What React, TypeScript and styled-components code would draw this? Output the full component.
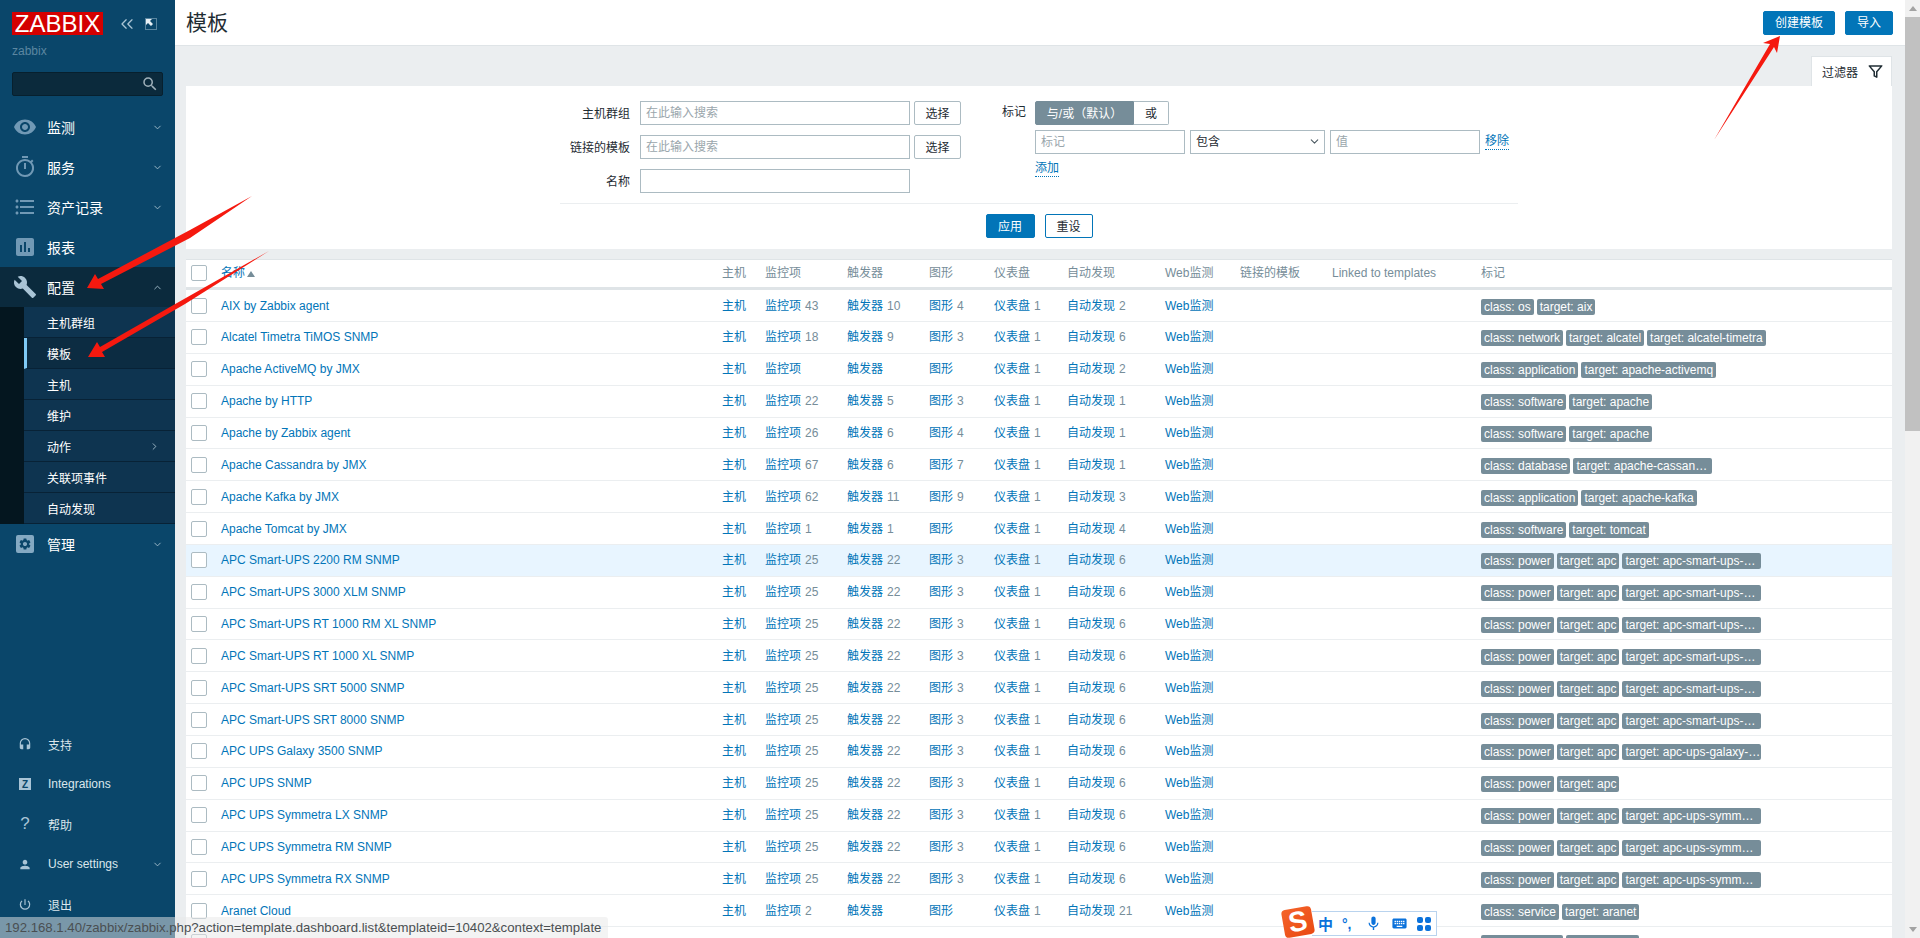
import React from 'react'
import styled, { createGlobalStyle } from 'styled-components'
import {
  MdVisibility,
  MdOutlineTimer,
  MdFormatListBulleted,
  MdAssessment,
  MdBuild,
  MdSettings,
  MdHeadset,
  MdPerson,
  MdPowerSettingsNew,
  MdMic,
  MdKeyboard,
  MdSearch,
} from 'react-icons/md'
import { LuChevronDown, LuChevronUp, LuChevronRight, LuChevronsLeft } from 'react-icons/lu'
import { FiFilter } from 'react-icons/fi'

const blue = '#0275b8'
const grey = '#768d99'
const dark = '#1f2c33'
const line = '#ebeef0'
const inputLine = '#acbbc2'

const GlobalStyle = createGlobalStyle`
  html, body {
    margin: 0;
    padding: 0;
    background: ${line};
  }
  * {
    box-sizing: border-box;
  }
  body {
    font-family: "Liberation Sans", "Noto Sans CJK SC", sans-serif;
    font-size: 12px;
    color: ${dark};
  }
`

const Page = styled.div`
  position: relative;
  display: flex;
  width: 1920px;
  height: 938px;
  overflow: hidden;
`

/* sidebar */

const Sidebar = styled.aside`
  display: flex;
  flex-direction: column;
  flex: none;
  width: 175px;
  padding-bottom: 14px;
  background: #0a466a;
  color: #fff;
`

const LogoRow = styled.div`
  display: flex;
  align-items: center;
  padding: 12px 0 0 12px;
`

const Logo = styled.div`
  width: 91px;
  height: 23px;
  background: #d40000;
  color: #fff;
  font-size: 24px;
  line-height: 24px;
  text-align: center;
  letter-spacing: 0;
`

const LogoButton = styled.span`
  display: flex;
  margin-left: 14px;
  color: #a9c4d4;
`

const KioskButton = styled.svg`
  margin-left: 8px;
`

const ServerName = styled.div`
  margin: 9px 0 0 12px;
  height: 14px;
  color: #5c87a1;
  font-size: 12px;
  line-height: 14px;
`

const SearchBox = styled.div`
  display: flex;
  align-items: center;
  justify-content: flex-end;
  height: 24px;
  margin: 14px 12px 0;
  padding-right: 3px;
  border: 1px solid #07202e;
  border-radius: 2px;
  background: #0b2a3c;
  color: #9fb0ba;
  font-size: 18px;
`

const Nav = styled.nav`
  margin-top: 11px;
`

const NavItem = styled.div<{ $open?: boolean }>`
  display: flex;
  align-items: center;
  height: 40px;
  padding: 0 12px 0 13px;
  background: ${p => (p.$open ? '#0b2a3d' : 'transparent')};
  font-size: 14px;
`

const NavIcon = styled.span<{ $open?: boolean }>`
  display: flex;
  justify-content: center;
  width: 24px;
  margin-right: 10px;
  color: ${p => (p.$open ? '#a9c4d6' : '#7199b5')};
  font-size: 24px;
`

const NavLabel = styled.span`
  flex: 1;
`

const NavChevron = styled.span`
  display: flex;
  color: #a3bdcc;
  font-size: 11px;
`

const SquareIcon = styled.span`
  display: flex;
  align-items: center;
  justify-content: center;
  width: 18px;
  height: 18px;
  border-radius: 2px;
  background: #84a9c2;
  color: #0a466a;
  font-size: 14px;
  font-weight: bold;
`

const SubMenu = styled.div`
  display: flex;
  flex-direction: column;
  padding-left: 24px;
  background: #04161f;
`

const SubItem = styled.div<{ $active?: boolean }>`
  display: flex;
  align-items: center;
  height: 31px;
  padding: 0 15px 0 ${p => (p.$active ? '20px' : '23px')};
  border-left: ${p => (p.$active ? '3px solid #7fcaf5' : 'none')};
  border-bottom: 1px solid #082236;
  background: ${p => (p.$active ? '#0c2c42' : '#0e3450')};
  font-size: 12px;
`

const SubLabel = styled.span`
  flex: 1;
`

const BottomNav = styled.div`
  margin-top: auto;
`

const BottomItem = styled.div`
  display: flex;
  align-items: center;
  height: 40px;
  padding: 0 12px 0 18px;
  color: #dbe6ec;
  font-size: 12px;
`

const BottomIcon = styled.span`
  display: flex;
  justify-content: center;
  width: 14px;
  margin-right: 16px;
  color: #a9c4d6;
  font-size: 17px;
`

const MiniSquare = styled.span`
  display: flex;
  align-items: center;
  justify-content: center;
  width: 12px;
  height: 12px;
  background: #a9c4d6;
  color: #0a466a;
  font-size: 10px;
  font-weight: bold;
`

/* main */

const Main = styled.main`
  flex: 1;
  min-width: 0;
  background: ${line};
`

const Header = styled.header`
  display: flex;
  align-items: center;
  gap: 10px;
  height: 46px;
  padding: 0 12px 0 11px;
  border-bottom: 1px solid #dfe4e7;
  background: #fff;
`

const Title = styled.h1`
  flex: 1;
  margin: 0 0 4px;
  font-size: 21px;
  font-weight: 400;
  color: ${dark};
`

const Button = styled.button<{ $variant?: 'primary' | 'plain' | 'outline' | 'grey'; $width: number }>`
  display: inline-flex;
  align-items: center;
  justify-content: center;
  width: ${p => p.$width}px;
  height: 24px;
  padding: 0 0 2px;
  border: 1px solid ${p => ({ primary: blue, plain: inputLine, outline: blue, grey }[p.$variant || 'plain'])};
  border-radius: 2px;
  background: ${p => (p.$variant === 'primary' ? blue : p.$variant === 'grey' ? grey : '#fff')};
  color: ${p => (p.$variant === 'primary' || p.$variant === 'grey' ? '#fff' : dark)};
  font: inherit;
`

const Content = styled.div`
  padding: 10px 13px 0 11px;
`

const FilterTabs = styled.div`
  display: flex;
  justify-content: flex-end;
`

const FilterTab = styled.div`
  display: flex;
  align-items: center;
  gap: 10px;
  width: 81px;
  height: 30px;
  padding-left: 10px;
  background: #fff;
  border-top: 1px solid #dfe4e7;
  border-left: 1px solid #dfe4e7;
  border-right: 1px solid #dfe4e7;
  font-size: 12px;
  color: ${dark};
`

const FilterPanel = styled.section`
  height: 163px;
  padding-top: 15px;
  background: #fff;
`

const FilterColumns = styled.div`
  display: flex;
  align-items: flex-start;
  height: 102px;
`

const FilterGrid = styled.div`
  display: grid;
  grid-template-columns: 454px 270px 51px;
  grid-auto-rows: 24px;
  row-gap: 10px;
  align-items: center;
`

const FieldLabel = styled.label`
  padding: 0 10px 2px 0;
  text-align: right;
`

const TextField = styled.input<{ $width?: number }>`
  width: ${p => (p.$width ? `${p.$width}px` : '100%')};
  height: 24px;
  padding: 0 5px;
  border: 1px solid ${inputLine};
  border-radius: 0;
  background: #fff;
  font: inherit;
  color: ${dark};
  outline: none;

  &::placeholder {
    color: #9aa6ac;
    opacity: 1;
  }
`

const PickButton = styled(Button)`
  justify-self: end;
  width: 47px;
`

const TagFilter = styled.div`
  display: flex;
  margin-left: 41px;
`

const TagFilterLabel = styled.span`
  width: 33px;
  line-height: 22px;
`

const TagFilterBody = styled.div`
  display: flex;
  flex-direction: column;
`

const Segmented = styled.div`
  display: flex;
`

const SegmentLeft = styled(Button)`
  border-radius: 2px 0 0 2px;
`

const SegmentRight = styled(Button)`
  border-left: none;
  border-radius: 0 2px 2px 0;
`

const TagRow = styled.div`
  display: flex;
  align-items: center;
  gap: 5px;
  margin-top: 5px;
`

const SelectWrap = styled.div`
  position: relative;
  display: flex;
  width: 135px;
  color: #4c5a62;
  font-size: 13px;

  svg {
    position: absolute;
    right: 4px;
    top: 5px;
    pointer-events: none;
  }
`

const TagSelect = styled.select`
  width: 100%;
  height: 24px;
  padding: 0 5px;
  border: 1px solid ${inputLine};
  border-radius: 0;
  background: #fff;
  font: inherit;
  font-size: 12px;
  color: ${dark};
  appearance: none;
`

const DottedLink = styled.a`
  color: ${blue};
  border-bottom: 1px dotted ${blue};
  line-height: 15px;
`

const AddLink = styled(DottedLink)`
  align-self: flex-start;
  margin-top: 7px;
`

const FilterActions = styled.div`
  display: flex;
  justify-content: center;
  gap: 10px;
  width: 958px;
  margin: 0 auto;
  padding-top: 10px;
  border-top: 1px solid ${line};
`

const TemplateTable = styled.div`
  margin-top: 10px;
  background: #fff;
  border-top: 1px solid #dfe4e7;
`

const columns = '35px 501px 43px 82px 82px 65px 73px 98px 75px 92px 149px 1fr'

const HeaderRow = styled.div`
  display: grid;
  grid-template-columns: ${columns};
  align-items: center;
  height: 30.2px;
  padding-bottom: 1px;
  border-bottom: 3px solid #dfe4e7;
  color: ${grey};
  line-height: 14px;
`

const TableRow = styled.div<{ $hover?: boolean }>`
  display: grid;
  grid-template-columns: ${columns};
  align-items: center;
  height: 31.85px;
  border-bottom: 1px solid ${line};
  background: ${p => (p.$hover ? '#e8f5ff' : '#fff')};
  line-height: 14px;
`

const CheckBox = styled.span`
  display: block;
  width: 16px;
  height: 16px;
  margin-left: 5px;
  border: 1px solid ${inputLine};
  border-radius: 2px;
  background: #fff;
`

const SortLink = styled.span`
  color: ${blue};
`

const SortArrow = styled.span`
  display: inline-block;
  margin-left: 2px;
  border-left: 4px solid transparent;
  border-right: 4px solid transparent;
  border-bottom: 6px solid ${grey};
`

const CellLink = styled.a`
  color: ${blue};
  white-space: nowrap;
`

const Count = styled.span`
  margin-left: 4px;
  color: ${grey};
`

const TagCell = styled.div`
  display: flex;
  gap: 3px;
  padding-top: 2px;
`

const Tag = styled.span<{ $clipped?: boolean }>`
  display: block;
  width: ${p => (p.$clipped ? '139px' : 'auto')};
  height: 16px;
  padding: 0 3px;
  border-radius: 2px;
  background: ${grey};
  color: #fff;
  line-height: 16px;
  white-space: nowrap;
`

/* only the top edge of the next row is on screen */

const TagEdgeCell = styled(TagCell)`
  grid-column: 12;
`

const TagEdge = styled.span<{ $width: number }>`
  display: block;
  width: ${p => p.$width}px;
  height: 16px;
  border-radius: 2px;
  background: ${grey};
`

/* browser scrollbar */

const ScrollBar = styled.div`
  display: flex;
  flex-direction: column;
  flex: none;
  width: 15px;
  background: #f1f1f1;
`

const ScrollArrow = styled.div<{ $down?: boolean }>`
  display: flex;
  align-items: center;
  justify-content: center;
  flex: none;
  height: 17px;
  margin-top: ${p => (p.$down ? 'auto' : '0')};

  &::before {
    content: '';
    border-left: 4px solid transparent;
    border-right: 4px solid transparent;
    border-${p => (p.$down ? 'top' : 'bottom')}: 5px solid #a3a3a3;
  }
`

const ScrollThumb = styled.div`
  flex: none;
  height: 414px;
  background: #c1c1c1;
`

/* things lying over the page */

const Annotations = styled.svg`
  position: absolute;
  inset: 0;
  pointer-events: none;
`

const StatusBar = styled.div`
  position: absolute;
  left: 0;
  bottom: 0;
  width: 608px;
  height: 21px;
  padding-left: 5px;
  border-top-right-radius: 3px;
  background: rgba(232, 232, 232, 0.5);
  color: #4a4f52;
  font-size: 13.2px;
  line-height: 21px;
  white-space: nowrap;
`

const ImeBar = styled.div`
  position: absolute;
  left: 1283px;
  top: 908px;
  display: flex;
  align-items: flex-end;
`

const ImeLogo = styled.div`
  position: relative;
  display: flex;
  align-items: center;
  justify-content: center;
  width: 30px;
  height: 28px;
  border-radius: 4px;
  background: linear-gradient(150deg, #f4632a, #ea4a12);
  color: #fff;
  font-size: 28px;
  font-weight: bold;
  transform: rotate(-10deg);
`

const ImeTools = styled.div`
  display: flex;
  align-items: center;
  gap: 9px;
  width: 125px;
  height: 25px;
  margin-left: -1px;
  padding-left: 6px;
  border: 1px solid #b9d3ee;
  border-left: none;
  background: #fff;
  color: #0b72db;
  font-size: 17px;
`

const ImeChar = styled.span`
  font-size: 15px;
  font-weight: bold;
`

const ImePunct = styled.span`
  width: 14px;
  font-size: 14px;
  font-weight: bold;
  line-height: 14px;
`

type Row = {
  name: string
  items?: number
  triggers?: number
  graphs?: number
  discovery: number
  tags: string[]
  hover?: boolean
}

const upsTags = (slug?: string) => ['class: power', 'target: apc', ...(slug ? [`target: ${slug}…`] : [])]

const rows: Row[] = [
  { name: 'AIX by Zabbix agent', items: 43, triggers: 10, graphs: 4, discovery: 2, tags: ['class: os', 'target: aix'] },
  { name: 'Alcatel Timetra TiMOS SNMP', items: 18, triggers: 9, graphs: 3, discovery: 6, tags: ['class: network', 'target: alcatel', 'target: alcatel-timetra'] },
  { name: 'Apache ActiveMQ by JMX', discovery: 2, tags: ['class: application', 'target: apache-activemq'] },
  { name: 'Apache by HTTP', items: 22, triggers: 5, graphs: 3, discovery: 1, tags: ['class: software', 'target: apache'] },
  { name: 'Apache by Zabbix agent', items: 26, triggers: 6, graphs: 4, discovery: 1, tags: ['class: software', 'target: apache'] },
  { name: 'Apache Cassandra by JMX', items: 67, triggers: 6, graphs: 7, discovery: 1, tags: ['class: database', 'target: apache-cassan…'] },
  { name: 'Apache Kafka by JMX', items: 62, triggers: 11, graphs: 9, discovery: 3, tags: ['class: application', 'target: apache-kafka'] },
  { name: 'Apache Tomcat by JMX', items: 1, triggers: 1, discovery: 4, tags: ['class: software', 'target: tomcat'] },
  { name: 'APC Smart-UPS 2200 RM SNMP', items: 25, triggers: 22, graphs: 3, discovery: 6, tags: upsTags('apc-smart-ups-'), hover: true },
  { name: 'APC Smart-UPS 3000 XLM SNMP', items: 25, triggers: 22, graphs: 3, discovery: 6, tags: upsTags('apc-smart-ups-') },
  { name: 'APC Smart-UPS RT 1000 RM XL SNMP', items: 25, triggers: 22, graphs: 3, discovery: 6, tags: upsTags('apc-smart-ups-') },
  { name: 'APC Smart-UPS RT 1000 XL SNMP', items: 25, triggers: 22, graphs: 3, discovery: 6, tags: upsTags('apc-smart-ups-') },
  { name: 'APC Smart-UPS SRT 5000 SNMP', items: 25, triggers: 22, graphs: 3, discovery: 6, tags: upsTags('apc-smart-ups-') },
  { name: 'APC Smart-UPS SRT 8000 SNMP', items: 25, triggers: 22, graphs: 3, discovery: 6, tags: upsTags('apc-smart-ups-') },
  { name: 'APC UPS Galaxy 3500 SNMP', items: 25, triggers: 22, graphs: 3, discovery: 6, tags: upsTags('apc-ups-galaxy-') },
  { name: 'APC UPS SNMP', items: 25, triggers: 22, graphs: 3, discovery: 6, tags: upsTags() },
  { name: 'APC UPS Symmetra LX SNMP', items: 25, triggers: 22, graphs: 3, discovery: 6, tags: upsTags('apc-ups-symm') },
  { name: 'APC UPS Symmetra RM SNMP', items: 25, triggers: 22, graphs: 3, discovery: 6, tags: upsTags('apc-ups-symm') },
  { name: 'APC UPS Symmetra RX SNMP', items: 25, triggers: 22, graphs: 3, discovery: 6, tags: upsTags('apc-ups-symm') },
  { name: 'Aranet Cloud', items: 2, discovery: 21, tags: ['class: service', 'target: aranet'] },
]

const headers = ['主机', '监控项', '触发器', '图形', '仪表盘', '自动发现', 'Web监测', '链接的模板', 'Linked to templates', '标记']

const subItems = ['主机群组', '模板', '主机', '维护', '动作', '关联项事件', '自动发现']

const CountLink = ({ label, count }: { label: string; count?: number }) => (
  <CellLink>
    {label}
    {count !== undefined && <Count>{count}</Count>}
  </CellLink>
)

const NavEntry = ({ icon, label, open, chevron }: { icon: React.ReactNode; label: string; open?: boolean; chevron?: boolean }) => (
  <NavItem $open={open}>
    <NavIcon $open={open}>{icon}</NavIcon>
    <NavLabel>{label}</NavLabel>
    {chevron && <NavChevron>{open ? <LuChevronUp /> : <LuChevronDown />}</NavChevron>}
  </NavItem>
)

const SideBar = () => (
  <Sidebar>
    <LogoRow>
      <Logo>ZABBIX</Logo>
      <LogoButton>
        <LuChevronsLeft size={20} strokeWidth={1.6} />
      </LogoButton>
      <KioskButton width="12" height="12" viewBox="0 0 12 12">
        <rect x="0.5" y="0.5" width="11" height="11" fill="none" stroke="#a9c4d4" strokeDasharray="1 1" />
        <path d="M1 1h6L5 3l3 3-2 2-3-3-2 2z" fill="#e8f0f5" />
      </KioskButton>
    </LogoRow>
    <ServerName>zabbix</ServerName>
    <SearchBox>
      <MdSearch />
    </SearchBox>
    <Nav>
      <NavEntry icon={<MdVisibility />} label="监测" chevron />
      <NavEntry icon={<MdOutlineTimer />} label="服务" chevron />
      <NavEntry icon={<MdFormatListBulleted />} label="资产记录" chevron />
      <NavEntry icon={<MdAssessment />} label="报表" />
      <NavEntry icon={<MdBuild />} label="配置" open chevron />
      <SubMenu>
        {subItems.map(item => (
          <SubItem key={item} $active={item === '模板'}>
            <SubLabel>{item}</SubLabel>
            {item === '动作' && (
              <NavChevron>
                <LuChevronRight />
              </NavChevron>
            )}
          </SubItem>
        ))}
      </SubMenu>
      <NavEntry
        icon={
          <SquareIcon>
            <MdSettings />
          </SquareIcon>
        }
        label="管理"
        chevron
      />
    </Nav>
    <BottomNav>
      <BottomItem>
        <BottomIcon>
          <MdHeadset />
        </BottomIcon>
        支持
      </BottomItem>
      <BottomItem>
        <BottomIcon>
          <MiniSquare>Z</MiniSquare>
        </BottomIcon>
        Integrations
      </BottomItem>
      <BottomItem>
        <BottomIcon>?</BottomIcon>
        帮助
      </BottomItem>
      <BottomItem>
        <BottomIcon>
          <MdPerson />
        </BottomIcon>
        <NavLabel>User settings</NavLabel>
        <NavChevron>
          <LuChevronDown />
        </NavChevron>
      </BottomItem>
      <BottomItem>
        <BottomIcon>
          <MdPowerSettingsNew />
        </BottomIcon>
        退出
      </BottomItem>
    </BottomNav>
  </Sidebar>
)

const Filter = () => (
  <>
    <FilterTabs>
      <FilterTab>
        过滤器
        <FiFilter size={15} strokeWidth={2.4} />
      </FilterTab>
    </FilterTabs>
    <FilterPanel>
      <FilterColumns>
        <FilterGrid>
          <FieldLabel>主机群组</FieldLabel>
          <TextField placeholder="在此输入搜索" readOnly />
          <PickButton $width={47}>选择</PickButton>
          <FieldLabel>链接的模板</FieldLabel>
          <TextField placeholder="在此输入搜索" readOnly />
          <PickButton $width={47}>选择</PickButton>
          <FieldLabel>名称</FieldLabel>
          <TextField readOnly />
        </FilterGrid>
        <TagFilter>
          <TagFilterLabel>标记</TagFilterLabel>
          <TagFilterBody>
            <Segmented>
              <SegmentLeft $variant="grey" $width={99}>与/或（默认）</SegmentLeft>
              <SegmentRight $width={35}>或</SegmentRight>
            </Segmented>
            <TagRow>
              <TextField $width={150} placeholder="标记" readOnly />
              <SelectWrap>
                <TagSelect defaultValue="包含">
                  <option>包含</option>
                </TagSelect>
                <LuChevronDown />
              </SelectWrap>
              <TextField $width={150} placeholder="值" readOnly />
              <DottedLink>移除</DottedLink>
            </TagRow>
            <AddLink>添加</AddLink>
          </TagFilterBody>
        </TagFilter>
      </FilterColumns>
      <FilterActions>
        <Button $variant="primary" $width={49}>应用</Button>
        <Button $variant="outline" $width={48}>重设</Button>
      </FilterActions>
    </FilterPanel>
  </>
)

const Templates = () => (
  <TemplateTable>
    <HeaderRow>
      <CheckBox />
      <SortLink>
        名称
        <SortArrow />
      </SortLink>
      {headers.map(h => (
        <span key={h}>{h}</span>
      ))}
    </HeaderRow>
    {rows.map(row => (
      <TableRow key={row.name} $hover={row.hover}>
        <CheckBox />
        <CellLink>{row.name}</CellLink>
        <CellLink>主机</CellLink>
        <CountLink label="监控项" count={row.items} />
        <CountLink label="触发器" count={row.triggers} />
        <CountLink label="图形" count={row.graphs} />
        <CountLink label="仪表盘" count={1} />
        <CountLink label="自动发现" count={row.discovery} />
        <CellLink>Web监测</CellLink>
        <span />
        <span />
        <TagCell>
          {row.tags.map(tag => (
            <Tag key={tag} $clipped={tag.endsWith('…')}>{tag}</Tag>
          ))}
        </TagCell>
      </TableRow>
    ))}
    <TableRow>
      <CheckBox />
      <TagEdgeCell>
        <TagEdge $width={82} />
        <TagEdge $width={73} />
      </TagEdgeCell>
    </TableRow>
  </TemplateTable>
)

export default function App() {
  return (
    <Page>
      <GlobalStyle />
      <SideBar />
      <Main>
        <Header>
          <Title>模板</Title>
          <Button $variant="primary" $width={72}>创建模板</Button>
          <Button $variant="primary" $width={48}>导入</Button>
        </Header>
        <Content>
          <Filter />
          <Templates />
        </Content>
      </Main>
      <ScrollBar>
        <ScrollArrow />
        <ScrollThumb />
        <ScrollArrow $down />
      </ScrollBar>
      <Annotations width="1920" height="938" viewBox="0 0 1920 938">
        <g fill="#f5190f">
          <polygon points="252,196 190,230 98,279 95,274 87,288 104,289 101,284 190,238" />
          <polygon points="269,251 177,303 100,347 97,342 88,357 105,357 102,352 185,304" />
          <polygon points="1714,140 1770,44 1763,43 1780,36 1777,53 1774,47" />
        </g>
      </Annotations>
      <StatusBar>192.168.1.40/zabbix/zabbix.php?action=template.dashboard.list&amp;templateid=10402&amp;context=template</StatusBar>
      <ImeBar>
        <ImeLogo>S</ImeLogo>
        <ImeTools>
          <ImeChar>中</ImeChar>
          <ImePunct>°,</ImePunct>
          <MdMic />
          <MdKeyboard />
          <svg width="14" height="14" viewBox="0 0 14 14" fill="#0b72db">
            <rect x="0" y="0" width="6" height="6" rx="2" />
            <rect x="8" y="0" width="6" height="6" rx="2" />
            <rect x="0" y="8" width="6" height="6" rx="2" />
            <rect x="8" y="8" width="6" height="6" rx="2" />
          </svg>
        </ImeTools>
      </ImeBar>
    </Page>
  )
}
